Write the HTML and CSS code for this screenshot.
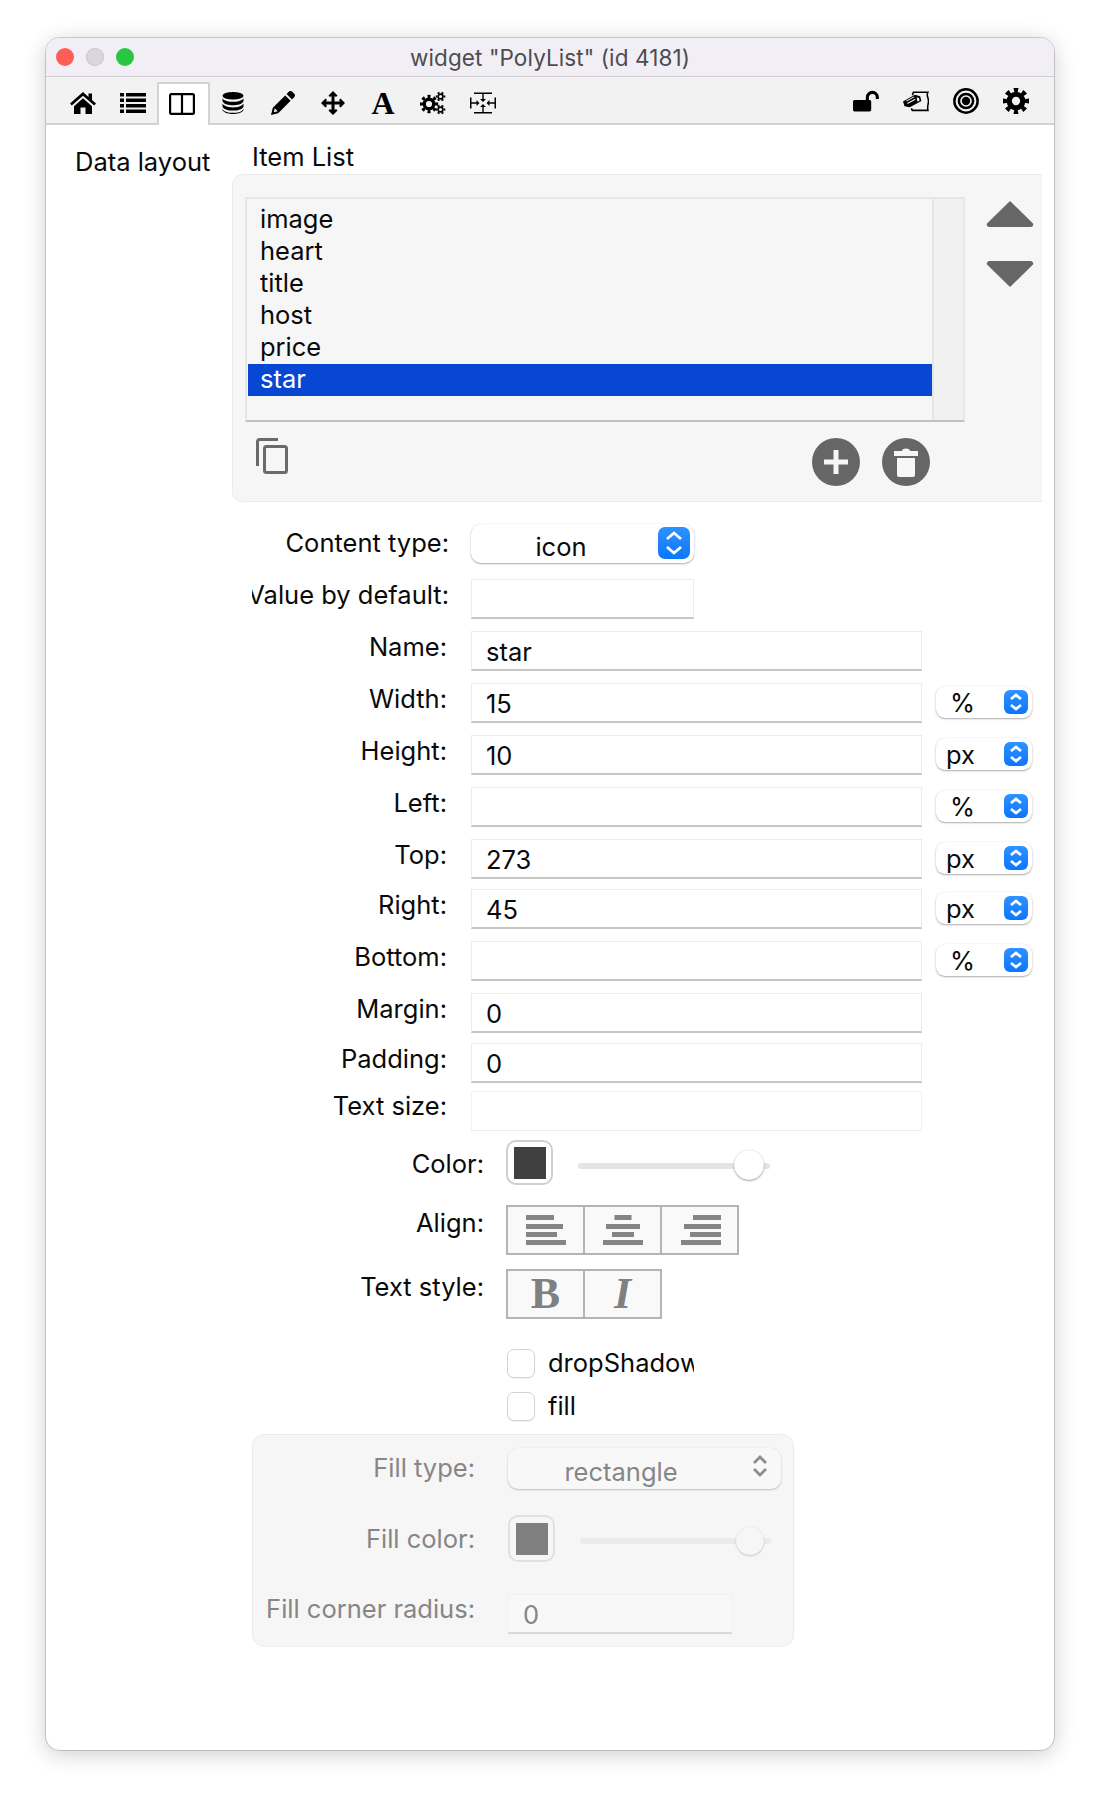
FILE: index.html
```html
<!DOCTYPE html>
<html lang="en">
<head>
<meta charset="utf-8">
<title>widget "PolyList"</title>
<link rel="stylesheet" href="styles.css">
</head>
<body>
<div class="window">
  <header class="titlebar">
    <div class="lights"><span class="light red"></span><span class="light grey"></span><span class="light green"></span></div>
    <div class="title">widget "PolyList" (id 4181)</div>
  </header>
  <nav class="toolbar">
    <div class="tool-group tool-group-left">
      <div class="tool"><svg class="ic" viewBox="0 0 26 22"><path d="M13 0 0 11.500l1.800 2L13 3.700l11.200 9.800 1.800-2-4-3.500V1.500h-3.500V5z"/><path d="M4 14.300 13 6.300l9 8V22h-6.500v-6.500h-5V22H4z"/></svg></div>
      <div class="tool"><svg class="ic" viewBox="0 0 26 20"><path d="M0 0h4v3.500H0zM6 0h20v3.500H6zM0 5.500h4V9H0zM6 5.500h20V9H6zM0 11h4v3.500H0zM6 11h20v3.500H6zM0 16.500h4V20H0zM6 16.500h20V20H6z"/></svg></div>
      <div class="tool active"><svg class="ic" viewBox="0 0 26 22"><path d="M2.500 0h21A2.500 2.500 0 0 1 26 2.500v17a2.500 2.500 0 0 1-2.500 2.500h-21A2.500 2.500 0 0 1 0 19.500v-17A2.500 2.500 0 0 1 2.500 0zM2.200 2.200v17.600h9.700V2.200zm11.900 0v17.600h9.700V2.200z" fill-rule="evenodd"/></svg></div>
      <div class="tool"><svg class="ic ic-db" viewBox="0 0 22 22"><ellipse cx="11" cy="3.800" rx="10.500" ry="3.800"/><path d="M.5 6.200C2 9 7 9.800 11 9.800s9-.8 10.500-3.600v3C20 12.400 15 13.200 11 13.200S2 12.400.5 9.200zM.5 11.600C2 14.600 7 15.400 11 15.400s9-.8 10.500-3.800v3.100C20 17.800 15 18.600 11 18.600S2 17.800.5 14.700zM.5 16.900C2 20 7 20.800 11 20.800s8.500-.6 10.500-3.900v1.300C19.500 21 15 22 11 22s-8.500-1-10.500-3.800z"/></svg></div>
      <div class="tool"><svg class="ic" viewBox="0 0 24 24"><path d="M17.800.8a2.400 2.400 0 0 1 3.400 0l2 2a2.400 2.400 0 0 1 0 3.400l-2.200 2.200-5.400-5.400zM14.200 4.400l5.400 5.400L7.200 22.200 0 24l1.800-7.200zM3.800 17.300l-1 3.900 3.900-1z" fill-rule="evenodd"/></svg></div>
      <div class="tool"><svg class="ic" viewBox="0 0 24 24"><path d="M12 0l4.500 4.500-1.500 1.500-1.500-1v5.500H19L18 9l1.500-1.500L24 12l-4.500 4.500L18 15l1-1.500h-5.500V19l1.500-1 1.500 1.500L12 24l-4.500-4.500L9 18l1.500 1v-5.500H5l1 1.500-1.500 1.500L0 12l4.500-4.500L6 9l-1 1.500h5.500V5L9 6 7.500 4.500z"/></svg></div>
      <div class="tool"><span class="glyph-a">A</span></div>
      <div class="tool"><svg class="ic" viewBox="0 0 26 23">
        <circle class="ring" cx="9" cy="12.500" r="4.800" stroke-width="3.400"/>
        <circle class="teeth" cx="9" cy="12.500" r="7.600" stroke-width="3.200" pathLength="16" stroke-dasharray="1 1" stroke-dashoffset=".5"/>
        <circle class="ring" cx="20.500" cy="5" r="2.400" stroke-width="1.700"/>
        <circle class="teeth" cx="20.500" cy="5" r="4" stroke-width="1.600" pathLength="12" stroke-dasharray="1 1" stroke-dashoffset=".5"/>
        <circle class="ring" cx="20.500" cy="18" r="2.400" stroke-width="1.700"/>
        <circle class="teeth" cx="20.500" cy="18" r="4" stroke-width="1.600" pathLength="12" stroke-dasharray="1 1" stroke-dashoffset=".5"/>
      </svg></div>
      <div class="tool"><svg class="ic" viewBox="0 0 26 21"><path d="M4 0h18v1.500H4zM4 19.500h18V21H4zM0 5h1.500v11H0zM24.500 5H26v11h-1.500zM12.300 1.500h1.400v5h2.300L13 9.500l-3-3h2.300zM12.300 19.500h1.400v-5h2.300l-3-3-3 3h2.300zM1.500 9.800h5V7.500l3 3-3 3v-2.300h-5zM24.500 9.800h-5V7.500l-3 3 3 3v-2.300h5z"/></svg></div>
    </div>
    <div class="tool-group tool-group-right">
      <div class="tool"><svg class="ic" viewBox="0 0 25 20"><path d="M1.500 9h14.500a1.500 1.500 0 0 1 1.500 1.500v8a1.500 1.500 0 0 1-1.500 1.500H1.500A1.500 1.500 0 0 1 0 18.500v-8A1.500 1.500 0 0 1 1.500 9z"/><path class="outline" d="M13.800 10V6.500a4.800 4.800 0 0 1 9.600 0V8" stroke-width="3"/></svg></div>
      <div class="tool"><svg class="ic" viewBox="0 0 25 20"><path class="outline" d="M9 4.500 10 1.500h14c-2 3 .5 5 .5 8.500s-1.500 5-.5 9H9l-1-2" stroke-width="1.500"/><path d="M0 10.500 11.500 4l5 1.500 1.200 4.500L6.500 16 1.500 15z"/><path class="paper" d="M13 6.500l2.300.7.700 2.400-2 1.100z"/><path class="paper" d="M3 9.800 10.500 5.700l.5.800L3.500 10.600zM4 12 11.500 7.900l.5.800L4.500 12.800z"/></svg></div>
      <div class="tool"><svg class="ic ic-lg" viewBox="0 0 25 25"><circle class="ring" cx="12.500" cy="12.500" r="11.200" stroke-width="2.400"/><circle class="ring" cx="12.500" cy="12.500" r="6.800" stroke-width="2.400"/><circle cx="12.500" cy="12.500" r="4"/></svg></div>
      <div class="tool"><svg class="ic ic-lg" viewBox="0 0 25 25"><circle class="ring" cx="12.500" cy="12.500" r="6.500" stroke-width="5"/><circle class="teeth" cx="12.500" cy="12.500" r="10.500" stroke-width="4.400" pathLength="16" stroke-dasharray="1 1" stroke-dashoffset=".5"/></svg></div>
    </div>
  </nav>
  <main class="content">
    <div class="side-title">Data layout</div>
    <div class="main">
      <div class="section-title">Item List</div>
      <section class="panel">
        <div class="list-box">
          <ul class="list">
            <li>image</li><li>heart</li><li>title</li><li>host</li><li>price</li><li class="selected">star</li>
          </ul>
          <div class="scrollbar"></div>
        </div>
        <div class="arrows">
          <svg class="tri" viewBox="0 0 48 28"><path d="M24 1 47 23.500q1 2.500-2 3.500H3q-3-1-2-3.500z"/></svg>
          <svg class="tri" viewBox="0 0 48 28"><path d="M24 27 47 4.500q1-2.500-2-3.500H3q-3 1-2 3.500z"/></svg>
        </div>
        <div class="list-actions">
          <svg class="copy" viewBox="0 0 32 36"><path d="M1.500 28V3.500a2 2 0 0 1 2-2H22" /><rect x="8.500" y="8.500" width="22" height="26" rx="2"/></svg>
          <svg class="round" viewBox="0 0 48 48"><circle cx="24" cy="24" r="24"/><path class="white" d="M21.500 12h5v9.500H36v5h-9.500V36h-5v-9.500H12v-5h9.500z"/></svg>
          <svg class="round" viewBox="0 0 48 48"><circle cx="24" cy="24" r="24"/><path class="white" d="M12 13h8q0-2.500 4-2.500t4 2.500h8v5H12zM15 20h18v17a2 2 0 0 1-2 2H17a2 2 0 0 1-2-2z"/></svg>
        </div>
      </section>

      <form class="form">
        <div class="row row-first">
          <label class="label label-center">Content type:</label>
          <div class="select select-short"><span class="select-text">icon</span>
            <span class="stepper"><svg viewBox="0 0 32 32"><path d="M9 12l7-6 7 6M9 20l7 6 7-6"/></svg></span></div>
        </div>
        <div class="row row-g16">
          <label class="label label-mid">Value by default:</label>
          <div class="field field-short"></div>
        </div>
        <div class="row row-g12">
          <label class="label">Name:</label>
          <div class="field">star</div>
        </div>
        <div class="row row-g12">
          <label class="label">Width:</label>
          <div class="field">15</div>
          <div class="unit"><span class="unit-text unit-pct">%</span><span class="stepper-sm"><svg viewBox="0 0 24 24"><path d="M7 9l5-4 5 4M7 15l5 4 5-4"/></svg></span></div>
        </div>
        <div class="row row-g12">
          <label class="label">Height:</label>
          <div class="field">10</div>
          <div class="unit"><span class="unit-text">px</span><span class="stepper-sm"><svg viewBox="0 0 24 24"><path d="M7 9l5-4 5 4M7 15l5 4 5-4"/></svg></span></div>
        </div>
        <div class="row row-g12">
          <label class="label">Left:</label>
          <div class="field"></div>
          <div class="unit"><span class="unit-text unit-pct">%</span><span class="stepper-sm"><svg viewBox="0 0 24 24"><path d="M7 9l5-4 5 4M7 15l5 4 5-4"/></svg></span></div>
        </div>
        <div class="row row-g12">
          <label class="label">Top:</label>
          <div class="field">273</div>
          <div class="unit"><span class="unit-text">px</span><span class="stepper-sm"><svg viewBox="0 0 24 24"><path d="M7 9l5-4 5 4M7 15l5 4 5-4"/></svg></span></div>
        </div>
        <div class="row row-g10">
          <label class="label">Right:</label>
          <div class="field">45</div>
          <div class="unit"><span class="unit-text">px</span><span class="stepper-sm"><svg viewBox="0 0 24 24"><path d="M7 9l5-4 5 4M7 15l5 4 5-4"/></svg></span></div>
        </div>
        <div class="row row-g12">
          <label class="label">Bottom:</label>
          <div class="field"></div>
          <div class="unit"><span class="unit-text unit-pct">%</span><span class="stepper-sm"><svg viewBox="0 0 24 24"><path d="M7 9l5-4 5 4M7 15l5 4 5-4"/></svg></span></div>
        </div>
        <div class="row row-g12">
          <label class="label">Margin:</label>
          <div class="field">0</div>
        </div>
        <div class="row row-g10">
          <label class="label">Padding:</label>
          <div class="field">0</div>
        </div>
        <div class="row row-g8">
          <label class="label label-text-size">Text size:</label>
          <div class="field field-flat"></div>
        </div>
        <div class="row row-color">
          <label class="label label-wide label-color">Color:</label>
          <div class="swatch"><span class="chip"></span></div>
          <div class="slider"><span class="thumb"></span></div>
        </div>
        <div class="row row-align">
          <label class="label label-wide label-up">Align:</label>
          <div class="seg">
            <div class="seg-cell"><svg class="seg-ic" viewBox="0 0 40 30"><path d="M0 0h28v5H0zM0 9h37v5H0zM0 17h31v5H0zM0 25h40v5H0z"/></svg></div>
            <div class="seg-cell"><svg class="seg-ic" viewBox="0 0 40 30"><path d="M11.500 0h17v5h-17zM3 9h34v5H3zM9 17h22v5H9zM0 25h40v5H0z"/></svg></div>
            <div class="seg-cell seg-cell-end"><svg class="seg-ic" viewBox="0 0 40 30"><path d="M12 0h28v5H12zM3 9h37v5H3zM9 17h31v5H9zM0 25h40v5H0z"/></svg></div>
          </div>
        </div>
        <div class="row row-style">
          <label class="label label-wide label-up">Text style:</label>
          <div class="seg">
            <div class="seg-cell seg-text seg-b">B</div>
            <div class="seg-cell seg-text seg-i">I</div>
          </div>
        </div>
        <div class="check check-first"><span class="box"></span><span class="check-text">dropShadow</span></div>
        <div class="check check-second"><span class="box"></span><span class="check-text">fill</span></div>

        <section class="fill-panel">
          <div class="fill-row fill-row-first">
            <label class="fill-label fill-label-type">Fill type:</label>
            <div class="fill-select"><span class="fill-select-text">rectangle</span>
              <svg class="fill-chev" viewBox="0 0 16 24"><path d="M2 9l6-6 6 6M2 15l6 6 6-6"/></svg></div>
          </div>
          <div class="fill-row fill-row-color">
            <label class="fill-label">Fill color:</label>
            <div class="swatch swatch-fill"><span class="chip chip-fill"></span></div>
            <div class="slider slider-fill"><span class="thumb thumb-fill"></span></div>
          </div>
          <div class="fill-row fill-row-radius">
            <label class="fill-label fill-label-up">Fill corner radius:</label>
            <div class="field field-fill">0</div>
          </div>
        </section>
      </form>
    </div>
  </main>
</div>
</body>
</html>
```
FILE: styles.css
```css
* { box-sizing: border-box; }
html, body { margin: 0; padding: 0; background: #fff; }
body {
  width: 1100px;
  height: 1804px;
  padding: 38px 46px 0;
  font-family: "Inter", "Noto Sans", "Liberation Sans", sans-serif;
  font-size: 25.500px;
  color: #0a0a0a;
  overflow: hidden;
}
.window {
  width: 1008px;
  height: 1712px;
  background: #fff;
  border-radius: 14px;
  overflow: hidden;
  display: flex;
  flex-direction: column;
  box-shadow: 0 0 0 1px rgba(0,0,0,.16), 0 4px 22px rgba(0,0,0,.2);
}
.titlebar {
  height: 39px;
  flex: none;
  background: #f2eef5;
  border-bottom: 1px solid #d0ced2;
  display: flex;
  align-items: center;
  justify-content: center;
  position: relative;
}
.lights { position: absolute; left: 10px; top: 10px; display: flex; gap: 12px; }
.light { width: 18px; height: 18px; border-radius: 50%; }
.red { background: #fd5f57; }
.grey { background: #dad6dc; box-shadow: inset 0 0 0 1px #cbc8ce; }
.green { background: #28c73f; }
.title { font-size: 22.500px; color: #4d4c50; letter-spacing: .1px; }

.toolbar {
  height: 48px;
  flex: none;
  background: #f2f2f2;
  border-bottom: 2px solid #d2d2d2;
  display: flex;
  justify-content: space-between;
  padding: 0 13px 0 12px;
}
.tool-group { display: flex; }
.tool-group-left { padding-top: 5px; }
.tool-group-right { padding-top: 1px; }
.tool {
  width: 50px;
  display: flex;
  align-items: center;
  justify-content: center;
}
.tool.active {
  height: 43px;
  background: #fff;
  border: 2px solid #d2d2d2;
  border-bottom: 0;
  border-radius: 2px 2px 0 0;
  width: 53px;
  margin-left: -1px;
  margin-right: -2px;
  padding: 0 3px 2px 0;
}
.ic { width: 26px; height: 24px; fill: #000; display: block; }
.ic-db { width: 22px; }
.ic-lg { width: 26px; height: 26px; }
.ring { fill: none; stroke: #000; }
.teeth { fill: none; stroke: #000; }
.outline { fill: none; stroke: #000; }
.paper { fill: #f2f2f2; }
.glyph-a {
  font-family: "Liberation Serif", serif;
  font-weight: 700;
  font-size: 32px;
  line-height: 24px;
  color: #000;
}

.content { flex: 1; display: flex; position: relative; min-height: 0; }
.side-title {
  width: 186px;
  flex: none;
  padding: 20px 0 0 29px;
  line-height: 34px;
  white-space: nowrap;
}
.main { flex: 1; }
.section-title { height: 49px; padding: 15px 0 0 20px; line-height: 34px; }

.panel {
  width: 810px;
  height: 328px;
  background: #f6f6f6;
  border: 1px solid #ececec;
  border-right: 0;
  border-radius: 10px 0 0 10px;
  padding: 22px 0 0 12px;
  display: grid;
  grid-template-columns: 720px 77px;
  grid-template-rows: 225px 64px;
}
.list-box {
  border-top: 2px solid #e6e6e6;
  border-left: 2px solid #e6e6e6;
  border-bottom: 2px solid #c0c0c0;
  border-right: 2px solid #e6e6e6;
  display: flex;
}
.list { list-style: none; margin: 0; padding: 5px 0 0 1px; flex: 1; min-width: 0; }
.list li { height: 32px; line-height: 30px; padding-left: 12px; }
.list .selected { background: #0747d3; color: #fff; }
.scrollbar {
  width: 31px;
  background: #f1f1f1;
  border-left: 2px solid #e6e6e6;
}
.arrows { padding: 3px 0 0 21px; display: flex; flex-direction: column; gap: 32px; }
.tri { width: 48px; height: 28px; fill: #666; display: block; }
.list-actions {
  margin-top: 16px;
  display: flex;
  align-items: flex-start;
  padding-left: 11px;
}
.copy { width: 32px; height: 36px; fill: none; stroke: #6a6a6a; stroke-width: 3; margin-right: 524px; }
.round { width: 48px; height: 48px; fill: #666; margin-right: 22px; }
.white { fill: #f6f6f6; }

.form { padding-left: 20px; }
.row { display: flex; align-items: flex-start; height: 40px; }
.row-first { margin-top: 22px; height: 39px; }
.row-g16 { margin-top: 16px; height: 40px; }
.row-g12 { margin-top: 12px; }
.row-g10 { margin-top: 10px; }
.row-g8 { margin-top: 8px; }
.label {
  width: 197px;
  height: 100%;
  flex: none;
  margin-right: 22px;
  display: flex;
  align-items: center;
  justify-content: flex-end;
  white-space: nowrap;
  overflow: hidden;
  padding-bottom: 10px;
  padding-right: 2px;
}
.label-center { padding-bottom: 2px; padding-right: 0; }
.label-mid { padding-bottom: 9px; padding-right: 0; }
.label-up { padding-bottom: 15px; }
.label-text-size { padding-bottom: 12px; }
.label-wide { width: 233px; margin-right: 21px; padding-right: 1px; }
.label-color { padding-bottom: 0; padding-top: 2px; }
.field {
  width: 451px;
  height: 100%;
  background: #fff;
  border: 1px solid #ececec;
  border-bottom: 2px solid #c6c6c6;
  padding: 2px 0 0 14px;
  line-height: 36px;
}
.field-short { width: 223px; }
.field-flat { border-color: #f2f2f2; border-bottom: 1px solid #ececec; }
.select {
  position: relative;
  height: 39px;
  background: #fff;
  border-radius: 10px;
  box-shadow: 0 1px 2px rgba(0,0,0,.32), 0 0 1px rgba(0,0,0,.12);
  overflow: hidden;
}
.select-short { width: 223px; }
.select-text { display: block; width: 180px; text-align: center; line-height: 45px; }
.stepper {
  position: absolute;
  right: 4px;
  top: 3px;
  width: 32px;
  height: 32px;
  border-radius: 7px;
  background: linear-gradient(#2e92ff, #0d76fb);
}
.stepper svg, .stepper-sm svg { display: block; fill: none; stroke: #fff; stroke-width: 2.800; }
.unit {
  position: relative;
  width: 96px;
  height: 32px;
  margin: 3px 0 0 14px;
  background: #fff;
  border-radius: 9px;
  box-shadow: 0 1px 2px rgba(0,0,0,.32), 0 0 1px rgba(0,0,0,.12);
  overflow: hidden;
}
.unit-text { display: block; padding-left: 10px; line-height: 34px; }
.unit-pct { padding-left: 14px; }
.stepper-sm {
  position: absolute;
  right: 4px;
  top: 4px;
  width: 24px;
  height: 24px;
  border-radius: 6px;
  background: linear-gradient(#2e92ff, #0d76fb);
}

.row-color { margin-top: 9px; height: 45px; align-items: center; }
.row-align { margin-top: 20px; height: 50px; }
.row-style { margin-top: 14px; height: 50px; }
.swatch {
  width: 47px;
  height: 45px;
  flex: none;
  border: 2px solid #cfcfcf;
  border-radius: 10px;
  display: flex;
  align-items: center;
  justify-content: center;
}
.chip { width: 32px; height: 32px; background: #404040; }
.slider {
  position: relative;
  width: 192px;
  height: 6px;
  margin: 6px 0 0 25px;
  background: #e4e4e4;
  border-radius: 3px;
}
.thumb {
  position: absolute;
  left: 156px;
  top: -13px;
  width: 30px;
  height: 30px;
  border-radius: 50%;
  background: #fff;
  box-shadow: 0 1px 2px rgba(0,0,0,.35), 0 0 1px rgba(0,0,0,.2);
}
.seg {
  display: flex;
  height: 50px;
  border: 2px solid #b4b4b4;
  background: #f9f9f9;
}
.seg-cell {
  width: 77px;
  height: 100%;
  border-right: 2px solid #b4b4b4;
  display: flex;
  align-items: center;
  justify-content: center;
}
.seg-cell:last-child { border-right: 0; width: 75px; }
.seg-cell-end { padding-left: 3px; }
.seg-ic { width: 40px; height: 30px; fill: #858585; display: block; }
.seg-text {
  font-family: "Liberation Serif", serif;
  font-size: 44px;
  font-weight: 700;
  color: #808080;
  line-height: 46px;
}
.seg-i { font-style: italic; }

.check { display: flex; align-items: center; height: 29px; padding-left: 255px; }
.check-first { margin-top: 30px; }
.check-second { margin-top: 14px; }
.box {
  width: 28px;
  height: 29px;
  flex: none;
  margin-right: 13px;
  border: 1px solid #d2d2d2;
  border-radius: 7px;
  background: #fff;
  box-shadow: 0 1px 1px rgba(0,0,0,.06);
}
.check-text { width: 146px; overflow: hidden; white-space: nowrap; line-height: 27px; height: 29px; }

.fill-panel {
  width: 542px;
  height: 213px;
  margin-top: 13px;
  background: #f6f6f6;
  border: 1px solid #ececec;
  border-radius: 12px;
  color: #868686;
}
.fill-row { display: flex; align-items: center; }
.fill-row-first { margin-top: 13px; height: 41px; }
.fill-row-color { margin-top: 26px; height: 47px; }
.fill-row-radius { margin-top: 32px; height: 40px; align-items: flex-start; }
.fill-label {
  width: 222px;
  flex: none;
  margin-right: 33px;
  text-align: right;
  white-space: nowrap;
}
.fill-label-type { margin-bottom: 2px; }
.fill-label-up { margin-top: -2px; line-height: 34px; }
.fill-select {
  position: relative;
  width: 273px;
  height: 41px;
  background: #f8f8f8;
  border-radius: 10px;
  box-shadow: 0 1px 2px rgba(0,0,0,.22), 0 0 1px rgba(0,0,0,.08);
  overflow: hidden;
}
.fill-select-text { display: block; width: 226px; text-align: center; line-height: 47px; }
.fill-chev {
  position: absolute;
  right: 13px;
  top: 6px;
  width: 16px;
  height: 24px;
  fill: none;
  stroke: #8e8e8e;
  stroke-width: 2.800;
}
.swatch-fill { height: 47px; border-color: #e0e0e0; }
.chip-fill { background: #808080; }
.slider-fill { width: 191px; margin: 4px 0 0 25px; background: #ebebeb; }
.thumb-fill {
  left: 156px;
  width: 28px;
  height: 28px;
  top: -11px;
  background: #f6f6f6;
  box-shadow: 0 1px 2px rgba(0,0,0,.18), 0 0 1px rgba(0,0,0,.1);
}
.field-fill {
  width: 224px;
  background: #f8f8f8;
  border-color: #f0f0f0;
  border-bottom-color: #d8d8d8;
  color: #868686;
}
```
